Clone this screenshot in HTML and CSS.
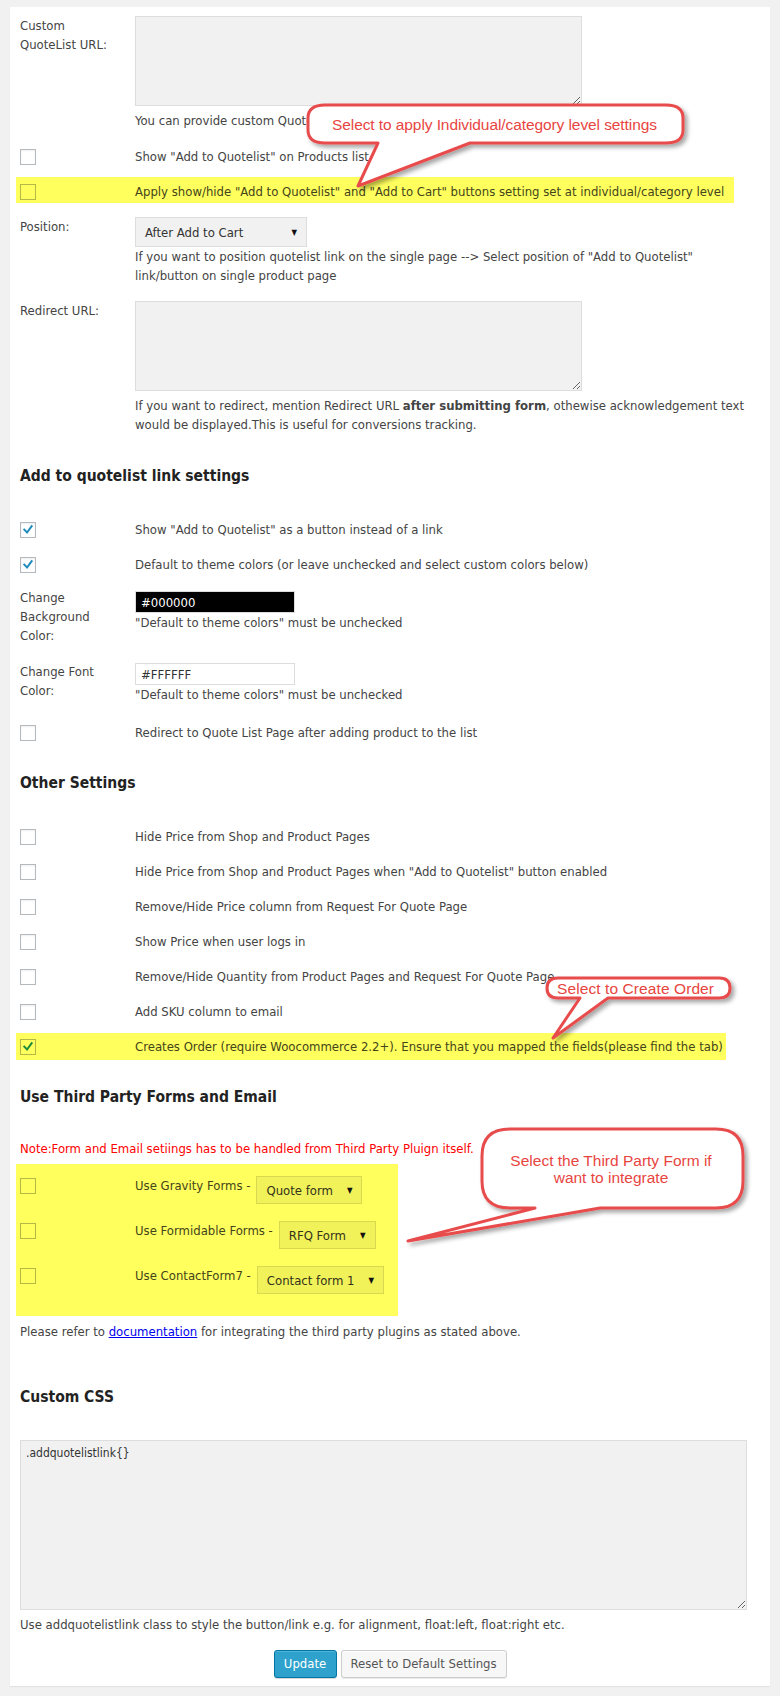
FILE: index.html
```html
<!DOCTYPE html>
<html>
<head>
<meta charset="utf-8">
<title>Quotelist Settings</title>
<link rel="stylesheet" href="styles.css">
</head>
<body>
<div class="page">
  <div class="panel">
    <div class="row r-url">
      <div class="label">Custom QuoteList URL:</div>
      <div class="field">
        <textarea class="ta ta-small"></textarea>
        <p class="help">You can provide custom QuoteList page URL here</p>
      </div>
    </div>

    <div class="crow r-b">
      <span class="cbcol"><span class="cb"></span></span>
      <span class="text">Show "Add to Quotelist" on Products list page</span>
    </div>

    <div class="crow hl band1">
      <span class="cbcol"><span class="cb"></span></span>
      <span class="text">Apply show/hide "Add to Quotelist" and "Add to Cart" buttons setting set at individual/category level</span>
    </div>

    <div class="row r-pos">
      <div class="label">Position:</div>
      <div class="field">
        <span class="sel sel-pos"><span>After Add to Cart</span><span class="arrow">&#9660;</span></span>
        <p class="help help-tight">If you want to position quotelist link on the single page --&gt; Select position of "Add to Quotelist" link/button on single product page</p>
      </div>
    </div>

    <div class="row r-redir">
      <div class="label">Redirect URL:</div>
      <div class="field">
        <textarea class="ta ta-small"></textarea>
        <p class="help">If you want to redirect, mention Redirect URL <b>after submitting form</b>, othewise acknowledgement text would be displayed.This is useful for conversions tracking.</p>
      </div>
    </div>

    <h3 class="sec h-link">Add to quotelist link settings</h3>

    <div class="crow first">
      <span class="cbcol"><span class="cb"><svg class="tick" viewBox="0 0 16 16"><path d="M3.8 7.6 L6.9 10.9 L12.2 3.6"/></svg></span></span>
      <span class="text">Show "Add to Quotelist" as a button instead of a link</span>
    </div>
    <div class="crow next">
      <span class="cbcol"><span class="cb"><svg class="tick" viewBox="0 0 16 16"><path d="M3.8 7.6 L6.9 10.9 L12.2 3.6"/></svg></span></span>
      <span class="text">Default to theme colors (or leave unchecked and select custom colors below)</span>
    </div>

    <div class="row r-bg">
      <div class="label">Change Background Color:</div>
      <div class="field">
        <span class="color-in dark">#000000</span>
        <p class="help help-tight">"Default to theme colors" must be unchecked</p>
      </div>
    </div>

    <div class="row r-font">
      <div class="label">Change Font Color:</div>
      <div class="field">
        <span class="color-in light">#FFFFFF</span>
        <p class="help help-tight">"Default to theme colors" must be unchecked</p>
      </div>
    </div>

    <div class="crow r-redirect-cb">
      <span class="cbcol"><span class="cb"></span></span>
      <span class="text">Redirect to Quote List Page after adding product to the list</span>
    </div>

    <h3 class="sec h-other">Other Settings</h3>

    <div class="crow first">
      <span class="cbcol"><span class="cb"></span></span>
      <span class="text">Hide Price from Shop and Product Pages</span>
    </div>
    <div class="crow next">
      <span class="cbcol"><span class="cb"></span></span>
      <span class="text">Hide Price from Shop and Product Pages when "Add to Quotelist" button enabled</span>
    </div>
    <div class="crow next">
      <span class="cbcol"><span class="cb"></span></span>
      <span class="text">Remove/Hide Price column from Request For Quote Page</span>
    </div>
    <div class="crow next">
      <span class="cbcol"><span class="cb"></span></span>
      <span class="text">Show Price when user logs in</span>
    </div>
    <div class="crow next">
      <span class="cbcol"><span class="cb"></span></span>
      <span class="text">Remove/Hide Quantity from Product Pages and Request For Quote Page</span>
    </div>
    <div class="crow next">
      <span class="cbcol"><span class="cb"></span></span>
      <span class="text">Add SKU column to email</span>
    </div>
    <div class="crow hl band2">
      <span class="cbcol"><span class="cb"><svg class="tick" viewBox="0 0 16 16"><path d="M3.8 7.6 L6.9 10.9 L12.2 3.6"/></svg></span></span>
      <span class="text">Creates Order (require Woocommerce 2.2+). Ensure that you mapped the fields(please find the tab)</span>
    </div>

    <h3 class="sec h-third">Use Third Party Forms and Email</h3>

    <p class="note">Note:Form and Email setiings has to be handled from Third Party Pluign itself.</p>

    <div class="hl third">
      <div class="trow">
        <span class="cbcol"><span class="cb"></span></span>
        <span class="text">Use Gravity Forms -</span>
        <span class="sel"><span>Quote form</span><span class="arrow">&#9660;</span></span>
      </div>
      <div class="trow">
        <span class="cbcol"><span class="cb"></span></span>
        <span class="text">Use Formidable Forms -</span>
        <span class="sel"><span>RFQ Form</span><span class="arrow">&#9660;</span></span>
      </div>
      <div class="trow">
        <span class="cbcol"><span class="cb"></span></span>
        <span class="text">Use ContactForm7 -</span>
        <span class="sel"><span>Contact form 1</span><span class="arrow">&#9660;</span></span>
      </div>
    </div>

    <p class="refer">Please refer to <a href="#">documentation</a> for integrating the third party plugins as stated above.</p>

    <h3 class="sec h-css">Custom CSS</h3>

    <textarea class="ta ta-css">.addquotelistlink{}</textarea>
    <p class="help">Use addquotelistlink class to style the button/link e.g. for alignment, float:left, float:right etc.</p>

    <div class="actions">
      <button class="btn primary">Update</button>
      <button class="btn secondary">Reset to Default Settings</button>
    </div>
  </div>

  <svg class="callouts" width="780" height="1696" viewBox="0 0 780 1696">
    <defs>
      <filter id="sh" x="-20%" y="-20%" width="140%" height="160%">
        <feDropShadow dx="3" dy="3" stdDeviation="2.2" flood-color="#000" flood-opacity="0.35"/>
      </filter>
    </defs>
    <path class="bubble" d="M325 105 H666 Q683 105 683 118 V130 Q683 143 666 143 H470 L358 186 L378 143 H325 Q308 143 308 130 V118 Q308 105 325 105 Z"/>
    <text class="ctext" x="332" y="130" textLength="325">Select to apply Individual/category level settings</text>

    <path class="bubble" d="M558 978 H719 Q730 978 730 988 Q730 998 719 998 H608 L553 1038 L580 998 H558 Q547 998 547 988 Q547 978 558 978 Z"/>
    <text class="ctext" x="557" y="994" textLength="157">Select to Create Order</text>

    <path class="bubble" d="M510 1129 H716 Q743 1129 743 1156 V1181 Q743 1208 716 1208 H600 L408 1241 L535 1208 H510 Q482 1208 482 1181 V1156 Q482 1129 510 1129 Z"/>
    <text class="ctext" x="611" y="1166" text-anchor="middle">Select the Third Party Form if</text>
    <text class="ctext" x="611" y="1183" text-anchor="middle">want to integrate</text>
  </svg>
</div>
</body>
</html>
```
FILE: styles.css
```css
html, body {
  margin: 0;
  padding: 0;
}
body {
  background: #f1f1f1;
  font-family: "DejaVu Sans Condensed", "DejaVu Sans", sans-serif;
  font-stretch: condensed;
  font-size: 13px;
  line-height: 19px;
  color: #444;
}
.page {
  position: relative;
  padding: 7px 10px 10px;
  width: 780px;
  box-sizing: border-box;
}
.panel {
  background: #fff;
  padding: 9px 10px 8px;
  box-shadow: 0 1px 1px rgba(0,0,0,0.06);
}
p { margin: 0; }

.row {
  display: flex;
  align-items: flex-start;
}
.label {
  width: 115px;
  flex: none;
  padding-right: 18px;
  box-sizing: border-box;
  color: #444;
}
.field {
  flex: 1;
  min-width: 0;
}
.help { margin-top: 5px; }
.field .help { max-width: 615px; }
.help-tight { margin-top: 0; }

.ta {
  display: block;
  box-sizing: border-box;
  background: #f1f1f1;
  border: 1px solid #ddd;
  font-family: inherit;
  font-stretch: condensed;
  font-size: 12px;
  line-height: 19px;
  color: #333;
  padding: 3px 5px;
  margin: 0;
}
.ta-small { width: 447px; height: 90px; }
.ta-css { width: 727px; height: 170px; margin-top: 33px; }

.crow {
  display: flex;
  align-items: flex-start;
}
.cbcol {
  width: 115px;
  flex: none;
}
.cb {
  display: block;
  width: 16px;
  height: 16px;
  box-sizing: border-box;
  border: 1px solid #b4b9be;
  background: #fff;
  margin-top: 2px;
  box-shadow: inset 0 1px 2px rgba(0,0,0,0.07);
}
.tick {
  display: block;
  width: 14px;
  height: 14px;
}
.tick path {
  fill: none;
  stroke: #1e8cbe;
  stroke-width: 2.3;
  stroke-linecap: square;
}

.hl { background: #ffff5e; }
.hl .cb { background: transparent; border-color: #b4b946; box-shadow: none; }
.hl .tick path { stroke: #1e8c3c; }
.hl .text { color: #44441a; }
.hl .sel { background: #f1f159; border-color: #d8d84e; color: #33331a; }

.r-b { margin-top: 17px; }
.band1 {
  margin-top: 11px;
  margin-left: -4px;
  padding: 5px 0 2px 4px;
  width: 714px;
}
.r-pos { margin-top: 14px; }
.r-redir { margin-top: 16px; }

.sel {
  display: inline-flex;
  align-items: center;
  justify-content: space-between;
  box-sizing: border-box;
  height: 28px;
  border: 1px solid #ddd;
  background: #f1f1f1;
  color: #333;
  padding: 0 9px 0 9px;
  gap: 14px;
  white-space: nowrap;
}
.sel .arrow {
  font-size: 8px;
  color: #111;
  font-family: "DejaVu Sans", sans-serif;
}
.sel-pos {
  display: flex;
  width: 172px;
  height: 30px;
}

.sec {
  margin: 0;
  font-size: 15.5px;
  line-height: 20px;
  font-weight: bold;
  color: #222;
}
.h-link { margin-top: 32px; }
.h-other { margin-top: 31px; }
.h-third { margin-top: 27px; }
.h-css { margin-top: 46px; }

.first { margin-top: 34px; }
.next { margin-top: 16px; }

.r-bg { margin-top: 14px; }
.r-font { margin-top: 17px; }
.color-in {
  display: block;
  box-sizing: border-box;
  width: 160px;
  height: 22px;
  border: 1px solid #ddd;
  padding: 1px 5px;
  line-height: 19px;
}
.r-bg .color-in { margin-top: 3px; }
.r-font .color-in { margin-top: 1px; }
.dark { background: #000; color: #fff; }
.light { background: #fff; color: #333; }
.r-redirect-cb { margin-top: 19px; }

.band2 {
  margin-top: 12px;
  margin-left: -4px;
  padding: 4px 0 4px 4px;
  width: 706px;
}

.note {
  margin-top: 32px;
  color: #f00;
}
.third {
  margin-top: 6px;
  margin-left: -4px;
  padding: 12px 0 22px 4px;
  width: 378px;
}
.trow {
  display: flex;
  align-items: flex-start;
}
.trow + .trow { margin-top: 17px; }
.trow .sel { margin-left: 6px; }

.refer { margin-top: 6px; }
.refer a { color: #0000ee; }

.actions {
  display: flex;
  justify-content: center;
  gap: 4px;
  margin-top: 16px;
}
.btn {
  height: 28px;
  box-sizing: border-box;
  border-radius: 3px;
  font-family: inherit;
  font-stretch: condensed;
  font-size: 13px;
  line-height: 26px;
  padding: 0 6px;
  margin: 0;
  white-space: nowrap;
}
.primary {
  width: 63px;
  background: #2ea2cc;
  border: 1px solid #0074a2;
  color: #fff;
  box-shadow: inset 0 1px 0 rgba(120,200,230,0.5), 0 1px 0 rgba(0,0,0,0.15);
}
.secondary {
  width: 166px;
  background: #f7f7f7;
  border: 1px solid #ccc;
  color: #555;
  box-shadow: inset 0 1px 0 #fff, 0 1px 0 rgba(0,0,0,0.08);
}

.callouts {
  position: absolute;
  top: 0;
  left: 0;
  pointer-events: none;
}
.bubble {
  fill: #fff;
  stroke: #e84c4c;
  stroke-width: 3;
  stroke-linejoin: round;
  filter: url(#sh);
}
.ctext {
  font-family: "Liberation Sans", Arial, sans-serif;
  font-size: 15.5px;
  fill: #e8453f;
}
```
